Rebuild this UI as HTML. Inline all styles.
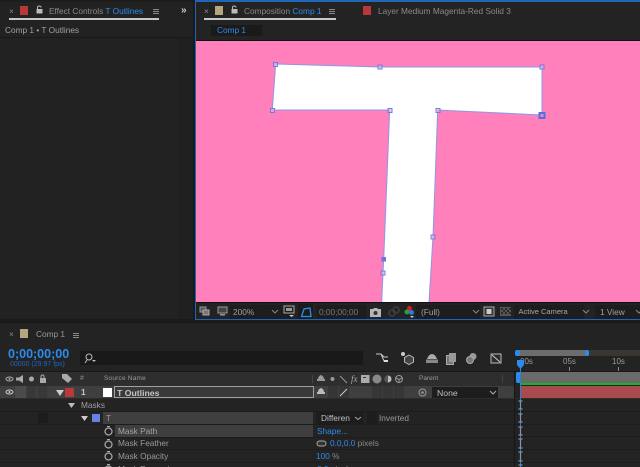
<!DOCTYPE html>
<html><head><meta charset="utf-8"><style>
html,body{margin:0;padding:0;background:#1a1a1a}
#p{position:relative;width:640px;height:467px;overflow:hidden;background:#1a1a1a;font-family:"Liberation Sans",sans-serif;font-size:8.3px;color:#9a9a9a}
#p div{position:absolute;white-space:nowrap}
.t{line-height:10px}
.bl{color:#2d8ceb}
svg{position:absolute;overflow:visible}
</style></head><body><div id="p">

<!-- left panel -->
<div style="left:0;top:0;width:193px;height:319px;background:#222"></div>
<div style="left:0;top:0;width:193px;height:2px;background:#1c1c1c"></div>
<div style="left:0;top:37px;width:193px;height:1px;background:#191919"></div>
<div style="left:178px;top:38px;width:15px;height:281px;background:#202020"></div>
<div class="t" style="left:9px;top:6px;color:#888">×</div>
<div style="left:20px;top:6px;width:8px;height:9px;background:#b8383c"></div>
<svg style="left:36px;top:5px" width="7" height="9"><path d="M1.500 4V2.500C1.500 .5 5 .5 5 2.500" fill="none" stroke="#bbb"/><rect x="0.500" y="4" width="6" height="4.500" fill="#bbb"/></svg>
<div class="t" style="left:49px;top:6px;color:#8a8a8a">Effect Controls <span class="bl">T Outlines</span></div>
<svg style="left:153px;top:9px" width="6" height="6"><path d="M0 .5H6M0 2.500H6M0 4.500H6" stroke="#888"/></svg>
<div style="left:9px;top:18px;width:150px;height:2px;background:#c8c8c8"></div>
<div class="t" style="left:181px;top:6px;color:#ccc;font-weight:bold;font-size:10px">»</div>
<div class="t" style="left:5px;top:25px;color:#a0a0a0">Comp 1 • T Outlines</div>

<!-- right panel -->
<div style="left:195px;top:0;width:445px;height:320px;background:#1f66b8"></div>
<div style="left:196px;top:2px;width:444px;height:38px;background:#232323"></div>
<div style="left:196px;top:40px;width:444px;height:1px;background:#111"></div>
<div class="t" style="left:204px;top:6px;color:#888">×</div>
<div style="left:215px;top:6px;width:8px;height:9px;background:#b6a57f"></div>
<svg style="left:231px;top:5px" width="7" height="9"><path d="M1.500 4V2.500C1.500 .5 5 .5 5 2.500" fill="none" stroke="#bbb"/><rect x="0.500" y="4" width="6" height="4.500" fill="#bbb"/></svg>
<div class="t" style="left:244px;top:6px;color:#8a8a8a">Composition <span class="bl">Comp 1</span></div>
<svg style="left:329px;top:9px" width="6" height="6"><path d="M0 .5H6M0 2.500H6M0 4.500H6" stroke="#888"/></svg>
<div style="left:204px;top:18px;width:132px;height:2px;background:#c8c8c8"></div>
<div style="left:363px;top:6px;width:8px;height:9px;background:#b8383c"></div>
<div class="t" style="left:378px;top:6px;color:#8a8a8a">Layer Medium Magenta-Red Solid 3</div>
<div style="left:211px;top:25px;width:51px;height:11px;background:#1a1a1a"></div>
<div class="t bl" style="left:217px;top:25px">Comp 1</div>

<!-- viewer -->
<div style="left:196px;top:41px;width:444px;height:261px;background:#ff80bb"></div>
<svg style="left:0;top:0" width="640" height="467" viewBox="0 0 640 467">
<polygon points="275.7,64 380,67 542,67 542,115 437.7,110 433,236.7 429,302 381.700,302 383,273 383.700,259 389.700,110 272.300,110" fill="#fff"/>
<path d="M275.700 64L380 67L542 67L542 115L437.700 110L433 236.700L429 302M381.700 302L383 273L383.700 259L389.700 110L272.300 110L275.700 64" fill="none" stroke="#8a98ea" stroke-width="1"/>
<g fill="#ffb0d8" fill-opacity=".55" stroke="#6a80e0" stroke-width="1">
<rect x="273.500" y="62.500" width="4" height="4"/><rect x="378" y="65" width="4" height="4"/><rect x="540" y="65" width="4" height="4"/>
<rect x="270.500" y="108.500" width="4" height="4"/><rect x="388" y="108.500" width="4" height="4"/><rect x="436" y="108.500" width="4" height="4"/>
<rect x="431" y="235" width="4" height="4"/><rect x="381" y="271" width="4" height="4"/>
</g>
<rect x="539.500" y="113" width="5" height="5" fill="#ff80bb" stroke="#4a72e0" stroke-width="2"/>
<rect x="381.500" y="257" width="4.500" height="4.500" fill="#6a78dc"/>
</svg>

<!-- viewer bar -->
<div style="left:196px;top:302px;width:444px;height:1px;background:#111"></div>
<div style="left:196px;top:303px;width:444px;height:16px;background:#232323"></div>
<div style="left:195px;top:319px;width:445px;height:1px;background:#1f66b8"></div>
<svg style="left:200px;top:306px" width="20" height="12"><rect x="0" y="1" width="6" height="5" fill="#555" stroke="#999"/><rect x="3" y="4" width="6" height="5" fill="#777" stroke="#aaa"/></svg>
<svg style="left:217px;top:306px" width="14" height="12"><rect x="1" y="1" width="9" height="6" fill="#444" stroke="#999"/><rect x="3" y="8" width="5" height="1.500" fill="#999"/></svg>
<div style="left:230px;top:305px;width:62px;height:14px;background:#1d1d1d"></div>
<div class="t" style="left:233px;top:307px;color:#a0a0a0">200%</div>
<svg style="left:271px;top:309px" width="8" height="5"><path d="M1 1L4 4L7 1" fill="none" stroke="#888"/></svg>
<svg style="left:283px;top:305px" width="15" height="13"><rect x="1" y="1" width="10" height="7" fill="none" stroke="#aaa"/><rect x="3" y="3" width="6" height="3" fill="#999"/><path d="M6 10h5l-2.500 2z" fill="#ccc"/></svg>
<div style="left:298px;top:304px;width:15px;height:15px;background:#1b1b1b"></div>
<svg style="left:300px;top:306px" width="13" height="12"><path d="M1.500 10.500L4 3L10 2L11 10.500Z" fill="none" stroke="#2d8ceb" stroke-width="1.300"/></svg>
<div style="left:316px;top:305px;width:50px;height:14px;background:#1d1d1d"></div>
<div class="t" style="left:319px;top:307px;color:#777">0;00;00;00</div>
<svg style="left:369px;top:307px" width="13" height="11"><path d="M1 2H4L5 1H8L9 2H12V10H1Z" fill="#b5b5b5"/><circle cx="6.500" cy="6" r="2" fill="#333"/></svg>
<svg style="left:387px;top:305px" width="14" height="13"><circle cx="5" cy="8" r="3" fill="none" stroke="#3e3e3e" stroke-width="1.500"/><circle cx="9" cy="5" r="3" fill="none" stroke="#3e3e3e" stroke-width="1.500"/></svg>
<svg style="left:402px;top:305px" width="14" height="14"><circle cx="7.500" cy="3.500" r="2.500" fill="#d62020"/><circle cx="5" cy="7" r="2.500" fill="#1fa53a"/><circle cx="9.500" cy="7.500" r="2.500" fill="#3a6fe0"/><path d="M8 11h4l-2 2z" fill="#ccc"/></svg>
<div style="left:416px;top:305px;width:64px;height:14px;background:#1d1d1d"></div>
<div class="t" style="left:421px;top:307px;color:#a0a0a0">(Full)</div>
<svg style="left:472px;top:309px" width="8" height="5"><path d="M1 1L4 4L7 1" fill="none" stroke="#888"/></svg>
<svg style="left:483px;top:306px" width="13" height="12"><rect x="1" y="1" width="10" height="9" fill="#333" stroke="#aaa"/><rect x="3.500" y="3" width="5" height="5" fill="#ccc"/></svg>
<svg style="left:500px;top:306px" width="12" height="12"><rect x="0" y="1" width="11" height="9" fill="#555"/><path d="M1 2h2v2h-2zM5 2h2v2h-2zM9 2h2v2h-2zM3 4h2v2h-2zM7 4h2v2h-2zM1 6h2v2h-2zM5 6h2v2h-2zM9 6h2v2h-2z" fill="#2a2a2a"/></svg>
<div style="left:514px;top:305px;width:70px;height:14px;background:#1d1d1d"></div>
<div class="t" style="left:518.500px;top:307px;color:#a8a8a8;font-size:7.500px">Active Camera</div>
<svg style="left:582px;top:309px" width="8" height="5"><path d="M1 1L4 4L7 1" fill="none" stroke="#888"/></svg>
<div style="left:595px;top:305px;width:45px;height:14px;background:#1d1d1d"></div>
<div class="t" style="left:600px;top:307px;color:#a0a0a0">1 View</div>
<svg style="left:635px;top:309px" width="8" height="5"><path d="M1 1L4 4L7 1" fill="none" stroke="#888"/></svg>

<!-- timeline -->
<div style="left:0;top:323px;width:640px;height:144px;background:#232323"></div>
<div class="t" style="left:9px;top:329px;color:#888">×</div>
<div style="left:20px;top:329px;width:8px;height:9px;background:#b6a57f"></div>
<div class="t" style="left:36px;top:329px;color:#9a9a9a">Comp 1</div>
<svg style="left:73px;top:333px" width="6" height="6"><path d="M0 .5H6M0 2.500H6M0 4.500H6" stroke="#888"/></svg>
<div class="t" style="left:8px;top:346.500px;font-size:12.500px;line-height:14px;font-weight:bold;color:#2b8cf0">0;00;00;00</div>
<div class="t" style="left:10px;top:359.500px;font-size:7px;color:#1f66b8">00000 (29.97 fps)</div>
<div style="left:80px;top:351px;width:283px;height:14px;background:#191919"></div>
<svg style="left:84px;top:353px" width="14" height="11"><circle cx="5" cy="4" r="3" fill="none" stroke="#bbb"/><path d="M3 7L1 10" stroke="#bbb"/><path d="M8 7h4l-2 2z" fill="#bbb"/></svg>
<svg style="left:375px;top:352px" width="16" height="13"><path d="M1 2H6L9 5H13M6 2L9 9H11" fill="none" stroke="#c8c8c8"/><rect x="9" y="8" width="4" height="2" fill="#ddd"/></svg>
<svg style="left:400px;top:351px" width="15" height="14"><circle cx="3" cy="3" r="2" fill="#ccc"/><path d="M9 4L13.500 6.500V11L9 13.500L4.500 11V6.500Z" fill="#444" stroke="#bbb"/></svg>
<svg style="left:426px;top:354px" width="13" height="10"><path d="M1 5C2 2 4 0 6 0C8 0 10 2 11 5Z" fill="#aaa"/><rect x="0" y="5.500" width="12" height="3.500" fill="#888"/></svg>
<svg style="left:445px;top:352px" width="14" height="13"><rect x="1.500" y="3.500" width="7" height="9" fill="#777" stroke="#aaa"/><rect x="4" y="1" width="7" height="9" fill="#999"/></svg>
<svg style="left:465px;top:352px" width="13" height="13"><circle cx="8" cy="4.500" r="3.500" fill="#999"/><circle cx="5" cy="8" r="3.500" fill="#777" stroke="#aaa"/></svg>
<svg style="left:490px;top:352px" width="13" height="13"><rect x="1" y="2" width="10" height="9" fill="#2c2c2c" stroke="#bbb"/><path d="M2 3L10 10" stroke="#ccc"/></svg>

<!-- timeline ruler -->
<div style="left:514px;top:346px;width:126px;height:26px;background:#232323"></div>
<div style="left:518px;top:350px;width:68px;height:6px;background:#6c6c6c"></div>
<div style="left:586px;top:350px;width:54px;height:6px;background:#3a3733"></div>
<div style="left:515px;top:350px;width:5px;height:6px;background:#2b8cf0;border-radius:2px"></div>
<div style="left:585px;top:350px;width:4px;height:6px;background:#2b8cf0;border-radius:2px"></div>
<div class="t" style="left:520px;top:357px;color:#999;font-size:8px">00s</div>
<div class="t" style="left:563px;top:357px;color:#999;font-size:8px">05s</div>
<div class="t" style="left:612px;top:357px;color:#999;font-size:8px">10s</div>
<div style="left:569px;top:367px;width:1px;height:5px;background:#888"></div>
<div style="left:618px;top:367px;width:1px;height:5px;background:#888"></div>

<!-- header row -->
<div style="left:0;top:371px;width:640px;height:1px;background:#171717"></div>
<div style="left:0;top:372px;width:514px;height:14px;background:#2e2e2e"></div>
<svg style="left:5px;top:374px" width="42" height="10"><ellipse cx="4.500" cy="5" rx="3.500" ry="2" fill="none" stroke="#aaa"/><circle cx="4.500" cy="5" r="1" fill="#aaa"/><path d="M11 3.500h3l4-2.500v8l-4-2.500h-3z" fill="#aaa"/><circle cx="26.500" cy="5" r="2.500" fill="#aaa"/><path d="M36 4V2.500C36 .5 39 .5 39 2.500V4" fill="none" stroke="#aaa"/><rect x="35" y="4" width="6" height="5" fill="#aaa"/></svg>
<svg style="left:61px;top:374px" width="12" height="10"><path d="M1 0H6L11 5L7 9L1 4Z" fill="#aaa"/></svg>
<div class="t" style="left:80px;top:374px;font-size:7px;color:#888">#</div>
<div class="t" style="left:104px;top:374px;font-size:6.500px;color:#999;letter-spacing:.2px">Source Name</div>
<svg style="left:316px;top:374px" width="90" height="10"><path d="M2 5C2 2 5 1 5 1C5 1 8 2 8 5ZM1 5H9V7H1Z" fill="#999"/><circle cx="16.500" cy="5" r="2" fill="#999"/><path d="M24 2L31 9" stroke="#999"/><text x="35" y="8" font-size="9" font-style="italic" fill="#aaa" font-family="Liberation Serif">fx</text><rect x="45" y="1" width="8.500" height="8" fill="#aaa"/><rect x="47" y="3" width="3" height="1" fill="#333"/><circle cx="61" cy="5" r="4.500" fill="#888"/><circle cx="72" cy="5" r="3.500" fill="#bbb"/><path d="M72 1.500A3.500 3.500 0 0 0 72 8.500Z" fill="#555"/><circle cx="83" cy="5" r="3.500" fill="none" stroke="#999"/><path d="M80 4L83 5.500L86 4M83 5.500V8.500" stroke="#999" fill="none"/></svg>
<div class="t" style="left:419px;top:374px;font-size:6.500px;color:#999">Parent</div>
<div style="left:312px;top:375px;width:1px;height:8px;background:#444"></div>
<div style="left:502px;top:375px;width:1px;height:8px;background:#444"></div>

<!-- layer row -->
<div style="left:0;top:386px;width:514px;height:12px;background:#3f3f3f"></div>
<div style="left:15px;top:386px;width:11px;height:12px;background:#4b4b4b"></div>
<div style="left:27px;top:386px;width:9px;height:12px;background:#383838"></div>
<div style="left:38px;top:386px;width:9px;height:12px;background:#383838"></div>
<svg style="left:56px;top:390px" width="9" height="7"><path d="M0 0H8L4 6Z" fill="#ccc"/></svg>
<svg style="left:5px;top:389px" width="10" height="6"><ellipse cx="4.500" cy="3" rx="3.500" ry="2" fill="none" stroke="#ccc"/><circle cx="4.500" cy="3" r="1" fill="#ccc"/></svg>
<div style="left:65px;top:388px;width:9px;height:9px;background:#b8383c"></div>
<div class="t" style="left:81px;top:387px;color:#c8c8c8;font-weight:bold">1</div>
<div style="left:103px;top:388px;width:9px;height:9px;background:#fff"></div>
<div style="left:114px;top:386px;width:198px;height:10px;background:#3a3a3a;border:1px solid #a0a0a0"></div>
<div class="t" style="left:117px;top:388px;color:#c4c4c4;font-weight:bold;font-size:8.700px">T Outlines</div>
<svg style="left:316px;top:388px" width="10" height="8"><path d="M2 4C2 1 5 0 5 0C5 0 8 1 8 4ZM1 4H9V6H1Z" fill="#bbb"/></svg>
<div style="left:328px;top:386px;width:10px;height:12px;background:#363636"></div>
<div style="left:339px;top:386px;width:10px;height:12px;background:#363636"></div>
<svg style="left:339px;top:387px" width="10" height="10"><path d="M1 9L8 2" stroke="#ccc"/></svg>
<div style="left:372px;top:386px;width:10px;height:12px;background:#363636"></div>
<div style="left:383px;top:386px;width:10px;height:12px;background:#363636"></div>
<div style="left:394px;top:386px;width:10px;height:12px;background:#363636"></div>
<svg style="left:418px;top:388px" width="10" height="9"><circle cx="4.500" cy="4.500" r="3.500" fill="none" stroke="#999"/><circle cx="4.500" cy="4.500" r="1.300" fill="#999"/></svg>
<div style="left:432px;top:387px;width:66px;height:11px;background:#1d1d1d"></div>
<div class="t" style="left:437px;top:388px;color:#bdbdbd;font-size:8.700px">None</div>
<svg style="left:489px;top:390px" width="8" height="5"><path d="M1 1L4 4L7 1" fill="none" stroke="#aaa"/></svg>

<!-- timeline tracks -->
<div style="left:514px;top:372px;width:126px;height:95px;background:#232323"></div>
<div style="left:514px;top:372px;width:1px;height:95px;background:#161616"></div>
<div style="left:517px;top:372px;width:123px;height:11px;background:#6a6a6a"></div>
<div style="left:516px;top:372px;width:5px;height:11px;background:#2b8cf0;border-radius:2px 0 0 2px"></div>
<div style="left:520px;top:383px;width:120px;height:2px;background:#17b51f"></div>
<div style="left:520px;top:386px;width:120px;height:12px;background:#a94a4f"></div>
<div style="left:515px;top:398px;width:125px;height:1px;background:#2c2c2c"></div>
<div style="left:515px;top:411px;width:125px;height:1px;background:#1c1c1c"></div>
<div style="left:515px;top:424px;width:125px;height:1px;background:#1c1c1c"></div>
<div style="left:515px;top:436px;width:125px;height:1px;background:#1c1c1c"></div>
<div style="left:515px;top:449px;width:125px;height:1px;background:#1c1c1c"></div>
<div style="left:515px;top:462px;width:125px;height:1px;background:#1c1c1c"></div>
<div style="left:520px;top:362px;width:1px;height:105px;background:#2b7fd8"></div>
<svg style="left:517px;top:360px" width="8" height="10"><path d="M0 0H7V5L3.500 9L0 5Z" fill="#2b8cf0"/></svg>
<svg style="left:518px;top:399px" width="6" height="68"><path d="M.5 2H4.500M2.500 2V10M.5 10H4.500M.5 15H4.500M2.500 15V23M.5 23H4.500M.5 28H4.500M2.500 28V36M.5 36H4.500M.5 40H4.500M2.500 40V49M.5 49H4.500M.5 53H4.500M2.500 53V62M.5 62H4.500M.5 66H4.500" stroke="#7f95ac" stroke-width="1.200" fill="none"/></svg>

<!-- Masks rows -->
<div style="left:0;top:398px;width:514px;height:1px;background:#2c2c2c"></div>
<svg style="left:68px;top:403px" width="8" height="6"><path d="M0 0H7L3.500 5Z" fill="#bbb"/></svg>
<div class="t" style="left:81px;top:400px;color:#a0a0a0">Masks</div>
<div style="left:0;top:411px;width:514px;height:1px;background:#1c1c1c"></div>
<div style="left:38px;top:413px;width:10px;height:10px;background:#1c1c1c"></div>
<svg style="left:81px;top:416px" width="8" height="6"><path d="M0 0H7L3.500 5Z" fill="#ccc"/></svg>
<div style="left:92px;top:414px;width:8px;height:8px;background:#6a80e0"></div>
<div style="left:103px;top:412px;width:210px;height:12px;background:#3f3f3f"></div>
<div class="t" style="left:106px;top:413px;color:#9a9a9a">T</div>
<div style="left:316px;top:412px;width:47px;height:12px;background:#1d1d1d"></div>
<div class="t" style="left:321px;top:413px;color:#c0c0c0">Differen</div>
<svg style="left:354px;top:416px" width="8" height="5"><path d="M1 1L4 3.500L7 1" fill="none" stroke="#aaa"/></svg>
<div style="left:367px;top:412px;width:10px;height:12px;background:#1d1d1d"></div>
<div class="t" style="left:379px;top:413px;color:#999">Inverted</div>

<div style="left:0;top:424px;width:514px;height:1px;background:#1c1c1c"></div>
<svg style="left:103px;top:425px" width="11" height="12"><circle cx="5.500" cy="6.500" r="3.500" fill="none" stroke="#aaa" stroke-width="1.200"/><path d="M4 1.500H7" stroke="#aaa"/></svg>
<div style="left:115px;top:425px;width:198px;height:12px;background:#3f3f3f"></div>
<div class="t" style="left:118px;top:425.500px;color:#a5a5a5">Mask Path</div>
<div class="t bl" style="left:317px;top:425.500px">Shape...</div>

<div style="left:0;top:437px;width:514px;height:1px;background:#1c1c1c"></div>
<svg style="left:103px;top:438px" width="11" height="12"><circle cx="5.500" cy="6.500" r="3.500" fill="none" stroke="#aaa" stroke-width="1.200"/><path d="M4 1.500H7" stroke="#aaa"/></svg>
<div class="t" style="left:118px;top:438px;color:#9a9a9a">Mask Feather</div>
<svg style="left:316px;top:440px" width="11" height="7"><rect x="1" y="1" width="9" height="5" rx="2.500" fill="#333" stroke="#aaa"/></svg>
<div class="t" style="left:330px;top:438px;color:#8a8a8a"><span class="bl">0.0,0.0</span> pixels</div>

<div style="left:0;top:449px;width:514px;height:1px;background:#1c1c1c"></div>
<svg style="left:103px;top:450px" width="11" height="12"><circle cx="5.500" cy="6.500" r="3.500" fill="none" stroke="#aaa" stroke-width="1.200"/><path d="M4 1.500H7" stroke="#aaa"/></svg>
<div class="t" style="left:118px;top:450.500px;color:#9a9a9a">Mask Opacity</div>
<div class="t" style="left:316px;top:450.500px;color:#8a8a8a"><span class="bl">100</span> %</div>

<div style="left:0;top:462px;width:514px;height:1px;background:#1c1c1c"></div>
<svg style="left:103px;top:463px" width="11" height="12"><circle cx="5.500" cy="6.500" r="3.500" fill="none" stroke="#aaa" stroke-width="1.200"/><path d="M4 1.500H7" stroke="#aaa"/></svg>
<div class="t" style="left:118px;top:464px;color:#9a9a9a">Mask Expansion</div>
<div class="t" style="left:317px;top:464px;color:#8a8a8a"><span class="bl">0.0</span> pixels</div>

</div></body></html>
